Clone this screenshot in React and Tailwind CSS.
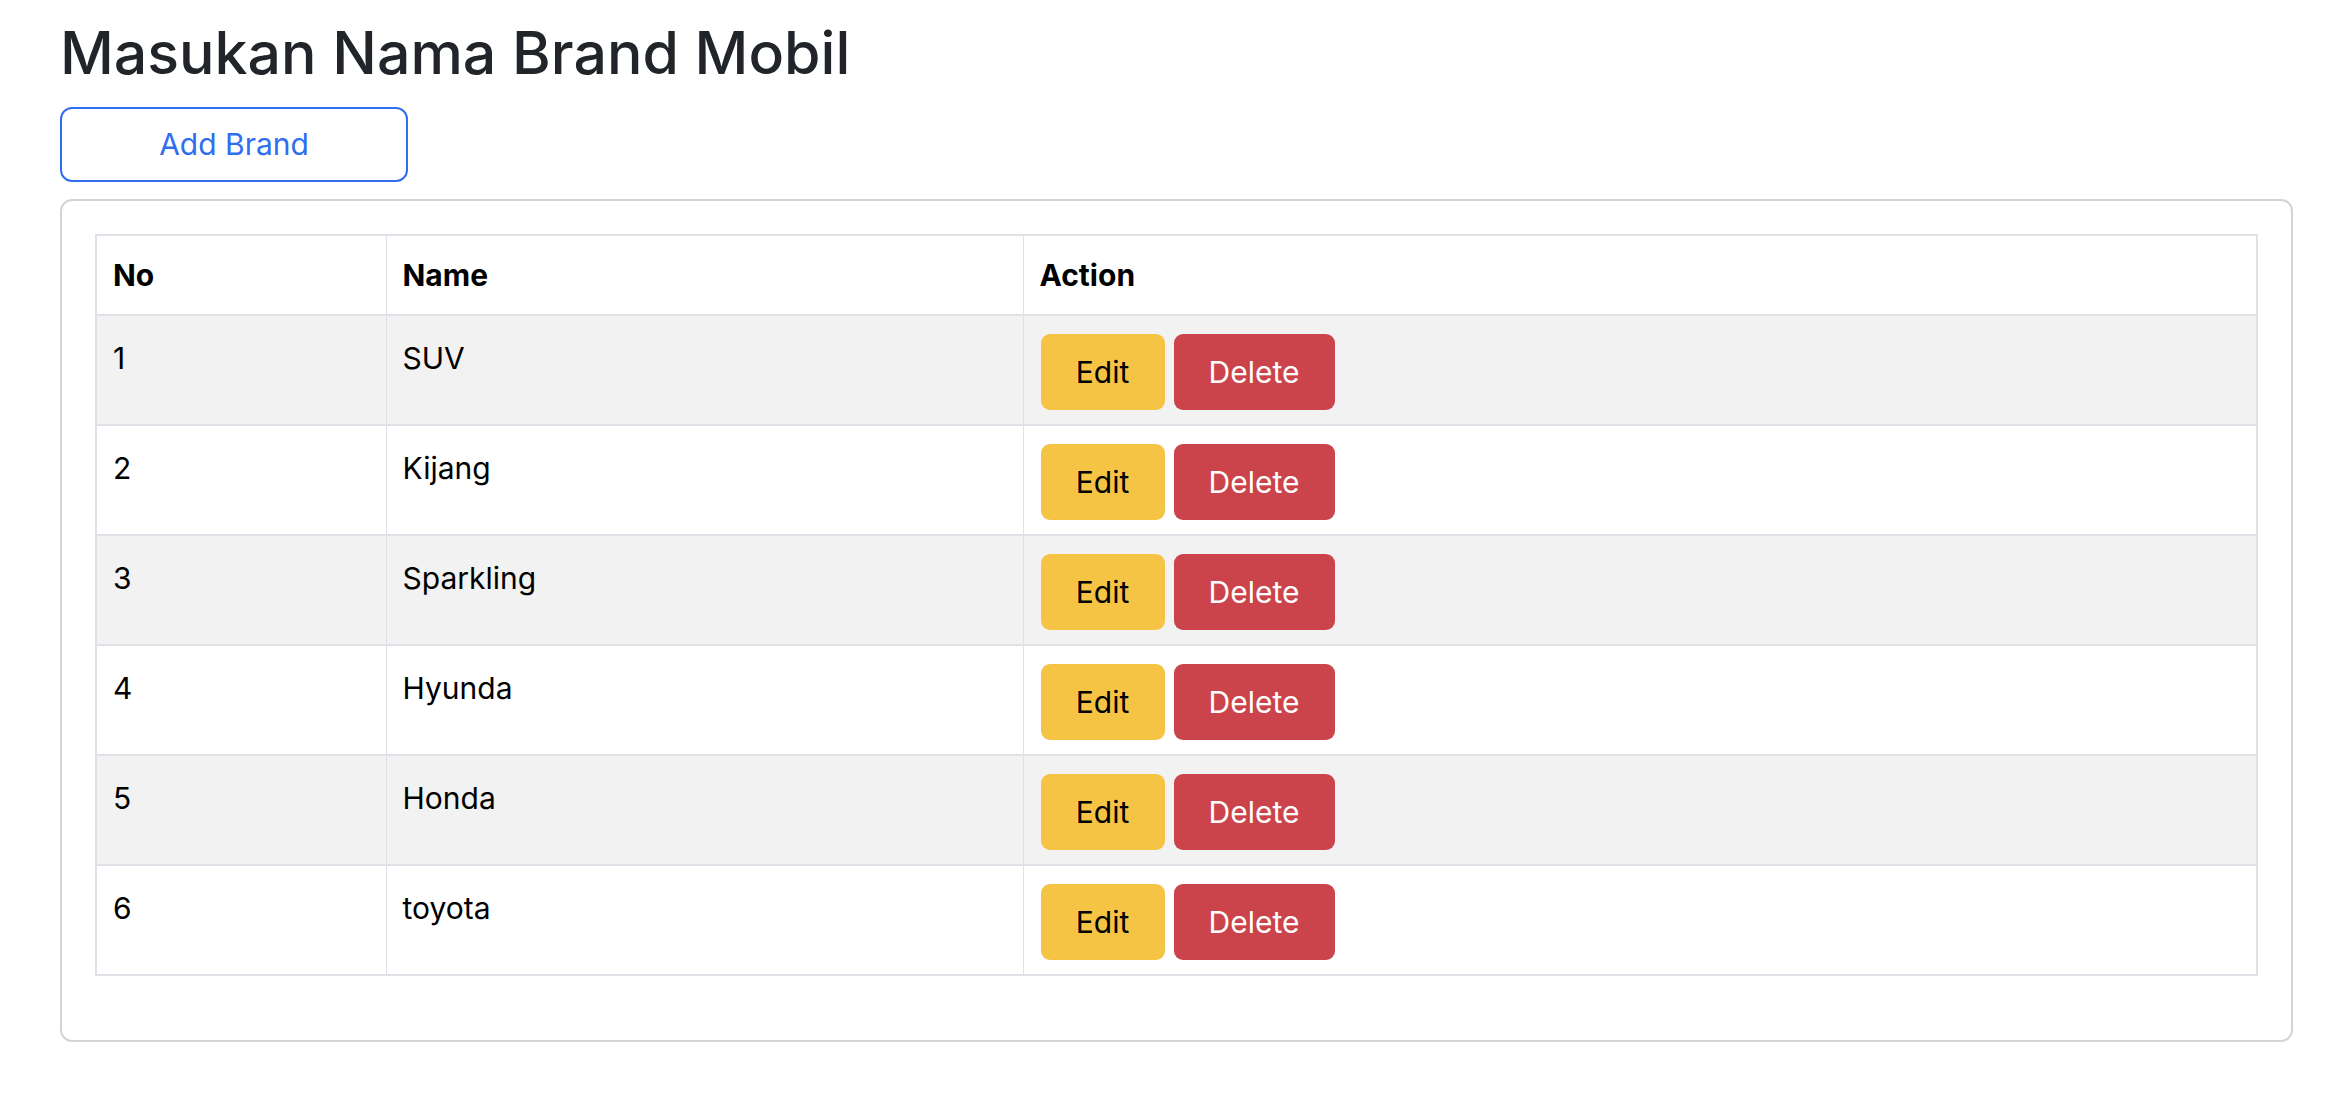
import React from 'react'

const brands = [
  { id: 1, name: 'SUV' },
  { id: 2, name: 'Kijang' },
  { id: 3, name: 'Sparkling' },
  { id: 4, name: 'Hyunda' },
  { id: 5, name: 'Honda' },
  { id: 6, name: 'toyota' },
]

function App() {
  return (
    <div className="min-h-screen bg-white pl-[60px] pr-[39px] pt-[17px] font-['Inter','Liberation_Sans',sans-serif]">
      <h1 className="text-[59px] font-medium leading-[72px] text-[#212529] mb-[18px]">
        Masukan Nama Brand Mobil
      </h1>

      <button className="w-[348px] h-[75px] border-2 border-[#2f6ef0] rounded-[12px] text-[30px] text-[#2f6ef0] bg-white">
        Add Brand
      </button>

      {/* Card */}
      <div className="mt-[17px] border-2 border-[#d4d4d4] rounded-[12px] px-[33px] pt-[33px] pb-[64px]">
        <table className="w-full border-collapse border-2 border-[#dee2e6] text-[30px] text-black">
          <thead>
            <tr className="border-b-2 border-[#dee2e6]">
              <th className="w-[290px] h-[80px] px-[16px] text-left font-bold border-r border-[#dee2e6]">No</th>
              <th className="w-[637px] px-[16px] text-left font-bold border-r border-[#dee2e6]">Name</th>
              <th className="px-[16px] text-left font-bold">Action</th>
            </tr>
          </thead>
          <tbody>
            {brands.map((b, i) => (
              <tr
                key={b.id}
                className={`border-b-2 border-[#dee2e6] ${i % 2 === 0 ? 'bg-[#f2f2f2]' : 'bg-white'}`}
              >
                <td className="align-top px-[16px] pt-[20px] pb-[16px] leading-[45px] border-r border-[#dee2e6]">{b.id}</td>
                <td className="align-top px-[16px] pt-[20px] pb-[16px] leading-[45px] border-r border-[#dee2e6]">{b.name}</td>
                <td className="align-top pl-[17px] pr-[18px] pt-[18px] pb-[14px]">
                  <div className="flex gap-[9px]">
                    <button className="w-[124px] h-[76px] rounded-[9px] bg-[#f6c445] text-black text-[30px]">
                      Edit
                    </button>
                    <button className="w-[161px] h-[76px] rounded-[9px] bg-[#cc444b] text-white text-[30px]">
                      Delete
                    </button>
                  </div>
                </td>
              </tr>
            ))}
          </tbody>
        </table>
      </div>
    </div>
  )
}

export default App
